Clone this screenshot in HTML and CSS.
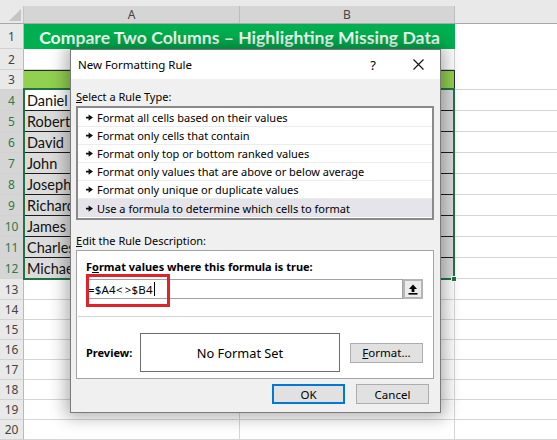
FILE: index.html
```html
<!DOCTYPE html>
<html>
<head>
<meta charset="utf-8">
<title>New Formatting Rule</title>
<link rel="stylesheet" href="styles.css">
</head>
<body>
<div class="app">
  <div class="sheet">
    <div class="strip"></div>
    <div class="row hdr">
      <div class="corner"><span class="tri"></span></div>
      <div class="colh sel">A</div>
      <div class="colh sel">B</div>
      <div class="colh"></div>
    </div>
    <div class="row r1">
      <div class="rh">1</div>
      <div class="title">Compare Two Columns – Highlighting Missing Data</div>
      <div class="blank"></div>
    </div>
    <div class="row r2">
      <div class="rh">2</div>
      <div class="g"></div>
      <div class="g"></div>
      <div class="blank"></div>
    </div>
    <div class="row r3">
      <div class="rh">3</div>
      <div class="h3"></div>
      <div class="h3"></div>
      <div class="w"></div>
    </div>
    <div class="row rd"><div class="rh sel">4</div><div class="t act">Daniel</div><div class="t"></div><div class="w"></div></div>
    <div class="row rd"><div class="rh sel">5</div><div class="t">Robert</div><div class="t"></div><div class="w"></div></div>
    <div class="row rd"><div class="rh sel">6</div><div class="t">David</div><div class="t"></div><div class="w"></div></div>
    <div class="row rd"><div class="rh sel">7</div><div class="t">John</div><div class="t"></div><div class="w"></div></div>
    <div class="row rd"><div class="rh sel">8</div><div class="t">Joseph</div><div class="t"></div><div class="w"></div></div>
    <div class="row rd"><div class="rh sel">9</div><div class="t">Richard</div><div class="t"></div><div class="w"></div></div>
    <div class="row rd"><div class="rh sel">10</div><div class="t">James</div><div class="t"></div><div class="w"></div></div>
    <div class="row rd"><div class="rh sel">11</div><div class="t">Charles</div><div class="t"></div><div class="w"></div></div>
    <div class="row rd"><div class="rh sel">12</div><div class="t">Michael</div><div class="t"></div><div class="w"></div></div>
    <div class="row rd"><div class="rh">13</div><div class="g"></div><div class="g"></div><div class="w"></div></div>
    <div class="row re"><div class="rh">14</div><div class="g"></div><div class="g"></div><div class="w"></div></div>
    <div class="row re"><div class="rh">15</div><div class="g"></div><div class="g"></div><div class="w"></div></div>
    <div class="row re"><div class="rh">16</div><div class="g"></div><div class="g"></div><div class="w"></div></div>
    <div class="row re"><div class="rh">17</div><div class="g"></div><div class="g"></div><div class="w"></div></div>
    <div class="row re"><div class="rh">18</div><div class="g"></div><div class="g"></div><div class="w"></div></div>
    <div class="row re"><div class="rh">19</div><div class="g"></div><div class="g"></div><div class="w"></div></div>
    <div class="row re"><div class="rh">20</div><div class="g"></div><div class="g"></div><div class="w"></div></div>
  </div>

  <div class="selbox"></div>
  <div class="handle"></div>

  <div class="dlg">
    <div class="tbar">
      <span class="ttl">New Formatting Rule</span>
      <span class="help">?</span>
      <span class="close"><svg width="11" height="11" viewBox="0 0 11 11"><path d="M0.5 0.5L10.5 10.5M10.5 0.5L0.5 10.5" stroke="#111" stroke-width="1.1" fill="none"/></svg></span>
    </div>
    <div class="body">
      <div class="lbl"><u>S</u>elect a Rule Type:</div>
      <div class="list">
        <div class="item"><svg class="arr" width="7" height="7" viewBox="0 0 7 7"><path d="M0 2.8h3v1.6H0z M2.6 0.4L7 3.6 2.6 6.8z" fill="#111"/></svg><span>Format all cells based on their values</span></div>
        <div class="item"><svg class="arr" width="7" height="7" viewBox="0 0 7 7"><path d="M0 2.8h3v1.6H0z M2.6 0.4L7 3.6 2.6 6.8z" fill="#111"/></svg><span>Format only cells that contain</span></div>
        <div class="item"><svg class="arr" width="7" height="7" viewBox="0 0 7 7"><path d="M0 2.8h3v1.6H0z M2.6 0.4L7 3.6 2.6 6.8z" fill="#111"/></svg><span>Format only top or bottom ranked values</span></div>
        <div class="item"><svg class="arr" width="7" height="7" viewBox="0 0 7 7"><path d="M0 2.8h3v1.6H0z M2.6 0.4L7 3.6 2.6 6.8z" fill="#111"/></svg><span>Format only values that are above or below average</span></div>
        <div class="item"><svg class="arr" width="7" height="7" viewBox="0 0 7 7"><path d="M0 2.8h3v1.6H0z M2.6 0.4L7 3.6 2.6 6.8z" fill="#111"/></svg><span>Format only unique or duplicate values</span></div>
        <div class="item on"><svg class="arr" width="7" height="7" viewBox="0 0 7 7"><path d="M0 2.8h3v1.6H0z M2.6 0.4L7 3.6 2.6 6.8z" fill="#111"/></svg><span>Use a formula to determine which cells to format</span></div>
      </div>
      <div class="lbl lbl2"><u>E</u>dit the Rule Description:</div>
      <div class="desc">
        <div class="blbl">F<u>o</u>rmat values where this formula is true:</div>
        <div class="frow">
          <div class="finput"><span class="ftxt">=$A4&lt;&#8201;&gt;$B4</span><span class="caret"></span></div>
          <div class="fbtn"><svg width="10" height="11" viewBox="0 0 10 11"><path d="M5 0.5L9 5H6.4V8H3.6V5H1Z" fill="#000"/><rect x="0.5" y="9" width="9" height="1.6" fill="#000"/></svg></div>
        </div>
        <div class="sep"></div>
        <div class="prow">
          <div class="plbl">Preview:</div>
          <div class="pbox">No Format Set</div>
          <div class="btn fmt"><u>F</u>ormat...</div>
        </div>
      </div>
      <div class="brow">
        <div class="btn ok">OK</div>
        <div class="btn">Cancel</div>
      </div>
    </div>
  </div>

  <div class="redbox"></div>
</div>
</body>
</html>
```

FILE: styles.css
```css
* { box-sizing: border-box; margin: 0; padding: 0; }
html, body { width: 557px; height: 440px; overflow: hidden; background: #fff; }
body { font-family: "Noto Sans", "Liberation Sans", sans-serif; color: #000; }

.app { position: relative; width: 557px; height: 440px; overflow: hidden; }

/* ---------- spreadsheet ---------- */
.sheet { display: flex; flex-direction: column; }
.strip { height: 6px; background: #e9e9e9; }
.row { display: grid; grid-template-columns: 24px 216px 215px 1fr; }
.hdr { height: 18px; background: #e9e9e9; border-bottom: 1px solid #a8a8a8; }
.corner { display: flex; align-items: flex-end; justify-content: flex-end; padding: 0 2px 2px 0; border-right: 1px solid #c4c4c4; }
.tri { width: 0; height: 0; border-left: 12px solid transparent; border-bottom: 12px solid #c4c4c4; }
.colh { font-size: 12px; color: #444; display: flex; align-items: center; justify-content: center; }
.colh.sel { background: #d5d5d5; border-right: 1px solid #bdbdbd; }

.r1 { height: 25px; }
.r2 { height: 21px; }
.r3 { height: 20px; }
.rd { height: 21px; }
.re { height: 20px; }

.rh { background: #e9e9e9; border-right: 1px solid #b9b9b9; border-bottom: 1px solid #d2d2d2; color: #444; font-size: 12px; display: flex; align-items: center; justify-content: center; }
.rh.sel { background: #d5d5d5; color: #2f7a48; }

.title { grid-column: 2 / 4; background: #00b050; color: #eefff3; font-family: Lato, "Liberation Sans", sans-serif; font-weight: 700; font-size: 17.6px; display: flex; align-items: center; justify-content: center; white-space: nowrap; padding-top: 1px; }
.blank { background: #fff; }
.g { border-right: 1px solid #d6d6d6; border-bottom: 1px solid #d6d6d6; }
.w { border-bottom: 1px solid #d6d6d6; }
.h3 { background: #92d050; border-top: 1px solid #2b2b2b; border-right: 1px solid #2b2b2b; border-bottom: 1px solid #2b2b2b; }
.t { background: #dcdcdc; border-right: 1px solid #1c1c1c; border-bottom: 1px solid #1c1c1c; font-family: Lato, "Liberation Sans", sans-serif; font-size: 14.5px; color: #111; padding-left: 3px; display: flex; align-items: center; white-space: nowrap; overflow: hidden; }
.t.act { background: #fff; }

.selbox { position: absolute; left: 23px; top: 88px; width: 432px; height: 192px; border: 2px solid #217346; }
.handle { position: absolute; left: 451px; top: 276px; width: 6px; height: 6px; background: #217346; border: 1px solid #fff; }

/* ---------- dialog ---------- */
.dlg { position: absolute; left: 70px; top: 49px; width: 371px; height: 364px; background: #f0f0f0; border: 1px solid #7a7a7a; box-shadow: 0 0 16px 4px rgba(0,0,0,0.32); display: flex; flex-direction: column; font-size: 11px; }
.tbar { height: 29px; background: #fff; display: flex; align-items: center; padding-left: 7px; font-size: 11.5px; }
.ttl { flex: 1; }
.help { width: 46px; text-align: center; font-size: 13px; }
.close { width: 44px; display: flex; justify-content: center; align-items: center; }

.body { padding: 10px 6px 0 5px; display: flex; flex-direction: column; }
.lbl { height: 16px; line-height: 16px; }
.lbl2 { margin-top: 13px; }

.list { margin-top: 1px; height: 114px; border: 2px solid #8a8a8a; background: #fff; padding: 1px 0; }
.item { height: 18px; display: flex; align-items: center; padding-left: 8px; border-bottom: 1px solid #ececec; white-space: nowrap; }
.item:last-child { border-bottom: none; }
.item.on { background: #e4e4ea; }
.arr { margin-right: 4px; flex: none; }

.desc { margin-top: 1px; height: 129px; border: 1px solid #a3a3a3; background: #fff; padding-top: 8px; }
.blbl { padding-left: 9px; height: 16px; line-height: 16px; font-weight: 700; }
.frow { display: flex; margin: 4px 10px 0 9px; height: 20px; }
.finput { flex: 1; border: 1px solid #a3a3a3; display: flex; align-items: center; padding-left: 1px; font-size: 11.5px; }
.ftxt { letter-spacing: 0.2px; }
.caret { width: 1px; height: 14px; background: #000; margin-left: 1px; }
.fbtn { width: 20px; border: 2px solid #b5b5b5; background: #ececec; display: flex; align-items: center; justify-content: center; }
.sep { margin: 17px 1px 0; height: 1px; background: #d4d4d4; }
.prow { display: flex; align-items: center; margin-top: 16px; padding-left: 9px; height: 39px; }
.plbl { width: 54px; font-weight: 700; }
.pbox { width: 200px; height: 39px; border: 1px solid #6e6e6e; display: flex; align-items: center; justify-content: center; font-size: 12.8px; }
.btn { width: 73px; height: 20px; background: #e1e1e1; border: 1px solid #adadad; display: flex; align-items: center; justify-content: center; font-size: 11.5px; }
.fmt { margin-left: 10px; }
.brow { display: flex; justify-content: flex-end; gap: 11px; margin-top: 5px; padding-right: 5px; }
.ok { border: 2px solid #0078d7; }

/* ---------- annotation ---------- */
.redbox { position: absolute; left: 86px; top: 274px; width: 84px; height: 33px; border: 3px solid #e2222b; }
```
